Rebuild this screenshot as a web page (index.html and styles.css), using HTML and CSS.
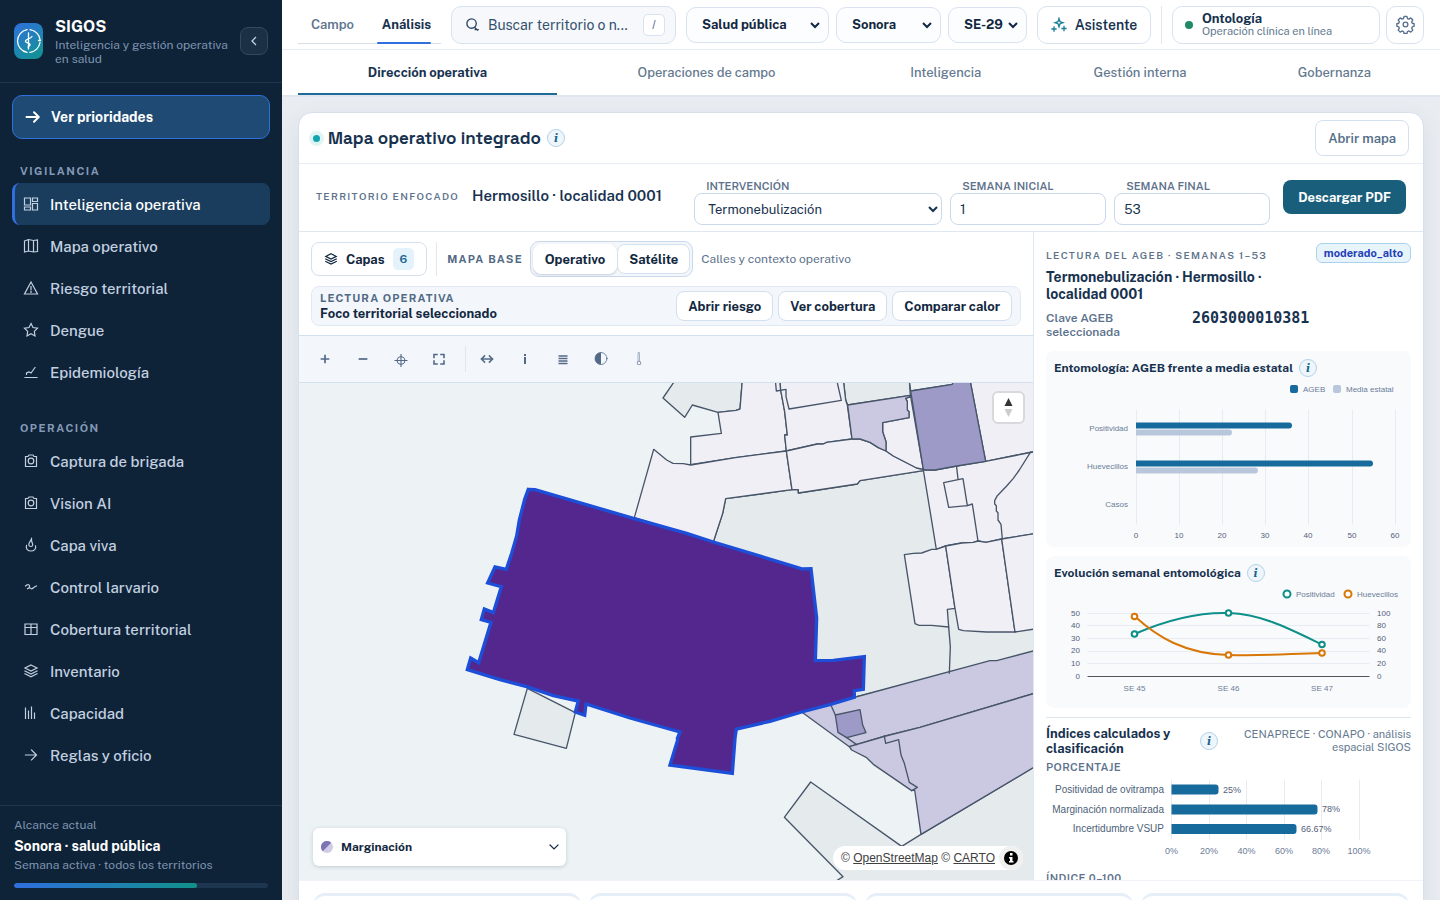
FILE: index.html
```html
<!DOCTYPE html>
<html lang="es">
<head>
<meta charset="utf-8">
<meta name="viewport" content="width=device-width, initial-scale=1">
<title>SIGOS</title>
<link rel="stylesheet" href="styles.css">
</head>
<body>
<div class="app">
  <aside class="sidebar">
    <header class="brand">
      <svg class="brand-logo" viewBox="0 0 29 36" aria-hidden="true">
        <defs><linearGradient id="logo" x1="0" y1="0" x2=".5" y2="1"><stop offset="0" stop-color="#2f6fde"/><stop offset="1" stop-color="#15909a"/></linearGradient></defs>
        <rect width="29" height="36" rx="8" fill="url(#logo)"/>
        <g fill="none" stroke="#fff" stroke-width="1.3" stroke-linecap="round">
          <path d="M13 6.6A11.6 11.6 0 0 0 13 29.400M16 6.600A11.600 11.600 0 0 1 26 16.500M26 19.500A11.600 11.600 0 0 1 16 29.400"/>
          <path d="M14.500 10v16M18 13.500c-2 3-7 2.500-6.500 5 .5 1.500 5 1.500 4.500 3.500-.3 1-1.500 1.500-2 2M24.500 17.500h2"/>
        </g>
      </svg>
      <div class="brand-text">
        <strong>SIGOS</strong>
        <span>Inteligencia y gestión operativa en salud</span>
      </div>
      <button class="collapse" aria-label="Contraer menú"><svg viewBox="0 0 10 10"><path d="M6.500 1.500L3 5l3.500 3.500"/></svg></button>
    </header>
    <div class="side-scroll">
      <button class="priority"><svg viewBox="0 0 16 16"><path d="M1.500 8h12M9 3.200L13.800 8 9 12.800"/></svg>Ver prioridades</button>
      <nav class="nav-group" aria-label="Vigilancia">
        <h2>Vigilancia</h2>
        <a class="nav-item active" href="#"><svg viewBox="0 0 16 16"><path d="M1.500 2h6v7h-6zM9.500 2h5v3.500h-5zM1.500 11h6v3h-6zM9.500 7.500h5V14h-5z"/></svg>Inteligencia operativa</a>
        <a class="nav-item" href="#"><svg viewBox="0 0 16 16"><path d="M1.500 3l4-1.500 5 1 4 -.5v11.500l-4 .5-5-1-4 1zM5.500 1.500V13M10.500 2.500V14"/></svg>Mapa operativo</a>
        <a class="nav-item" href="#"><svg viewBox="0 0 16 16"><path d="M8 2l6.500 12h-13zM8 6.500V10M8 11.500v1"/></svg>Riesgo territorial</a>
        <a class="nav-item" href="#"><svg viewBox="0 0 16 16"><path d="M8 1.500l2 4 4.500.7-3.200 3.200.7 4.600-4-2.200-4 2.200.7-4.600L1.500 6.200 6 5.500z"/></svg>Dengue</a>
        <a class="nav-item" href="#"><svg viewBox="0 0 16 16"><path d="M2 13.500h12M3.500 10.500V9l2.500-1 2 1 4-5.500"/></svg>Epidemiología</a>
      </nav>
      <nav class="nav-group" aria-label="Operación">
        <h2>Operación</h2>
        <a class="nav-item" href="#"><svg viewBox="0 0 16 16"><path d="M2.500 3.500H5L6 2h4l1 1.500h2.500v10h-11z"/><circle cx="8" cy="8" r="2.800"/></svg>Captura de brigada</a>
        <a class="nav-item" href="#"><svg viewBox="0 0 16 16"><path d="M2.500 3.500H5L6 2h4l1 1.500h2.500v10h-11z"/><circle cx="8" cy="8" r="2.800"/></svg>Vision AI</a>
        <a class="nav-item" href="#"><svg viewBox="0 0 16 16"><path d="M8.500 1.500C8 4 5.500 5.500 5.800 8c.2 2 3.700 2 3.900 0C9.800 6 8 5 8.500 1.500M3.500 8.500C2.500 12 5 14 8 14s5.500-2 4.500-5"/></svg>Capa viva</a>
        <a class="nav-item" href="#"><svg viewBox="0 0 16 16"><path d="M2.500 7C5 4.500 7 6 6.500 8S4 9.500 4.500 9.500 7 8 8 9.500s3-2 5.500-2.500"/></svg>Control larvario</a>
        <a class="nav-item" href="#"><svg viewBox="0 0 16 16"><path d="M2 3h12v10.500H2zM2 6.500h12M8 3v10.500"/></svg>Cobertura territorial</a>
        <a class="nav-item" href="#"><svg viewBox="0 0 16 16"><path d="M8 2l6 3-6 3-6-3zM2 8l6 3 6-3M2 10.800l6 3 6-3"/></svg>Inventario</a>
        <a class="nav-item" href="#"><svg viewBox="0 0 16 16"><path d="M2.500 3v10.500M5.500 6v7.500M8.500 2v11.500M11.500 8v5.500"/></svg>Capacidad</a>
        <a class="nav-item" href="#"><svg viewBox="0 0 16 16"><path d="M2.500 8h11M8.500 3l5 5-5 5"/></svg>Reglas y oficio</a>
      </nav>
    </div>
    <footer class="scope">
      <span>Alcance actual</span>
      <strong>Sonora · salud pública</strong>
      <span>Semana activa · todos los territorios</span>
      <div class="scope-bar"><i></i></div>
    </footer>
  </aside>

  <div class="page">
    <header class="topbar">
      <div class="modes">
        <button class="mode">Campo</button>
        <button class="mode on">Análisis</button>
      </div>
      <label class="search">
        <svg viewBox="0 0 16 16"><circle cx="7" cy="7" r="5"/><path d="M10 11l3.500 3M11 13.500h3"/></svg>
        <input type="text" placeholder="Buscar territorio o n..." aria-label="Buscar territorio">
        <kbd>/</kbd>
      </label>
      <div class="pick sector"><select aria-label="Sector"><option>Salud pública</option></select></div>
      <div class="pick state"><select aria-label="Estado"><option>Sonora</option></select></div>
      <div class="pick week"><select aria-label="Semana"><option>SE-29</option></select></div>
      <button class="assistant"><svg viewBox="0 0 16 16"><path d="M8 1.500l1 3.200 3 1-3 1-1 3.200-1-3.200-3-1 3-1zM3 10v4M1 12h4M13 9.500v4M11 11.500h4"/></svg>Asistente</button>
      <span class="top-divider"></span>
      <button class="status"><i></i><span><strong>Ontología</strong><small>Operación clínica en línea</small></span></button>
      <button class="gear" aria-label="Configuración"><svg viewBox="0 0 20 20"><circle cx="10" cy="10" r="2.500"/><path d="M8.500 1.500h3l.6 2.200 1.500.6 2-1.200 2.100 2.100-1.200 2 .6 1.500 2 .5v2.600l-2 .6-.6 1.500 1.200 2-2.100 2.100-2-1.200-1.500.6-.6 2.100h-3l-.6-2.100-1.500-.6-2 1.200-2.100-2.100 1.200-2-.6-1.500-2-.6V9.200l2-.5.6-1.500-1.200-2 2.100-2.100 2 1.200 1.500-.6z"/></svg></button>
    </header>
    <nav class="subnav" aria-label="Secciones">
      <a class="on" href="#">Dirección operativa</a>
      <a href="#">Operaciones de campo</a>
      <a href="#">Inteligencia</a>
      <a href="#">Gestión interna</a>
      <a href="#">Gobernanza</a>
    </nav>

    <main class="content">
      <section class="panel">
        <header class="panel-head">
          <i class="live"></i>
          <h1>Mapa operativo integrado</h1>
          <button class="info" aria-label="Información del mapa">i</button>
          <button class="btn open-map">Abrir mapa</button>
        </header>
        <form class="filters">
          <div class="focus"><span>Territorio enfocado</span><strong>Hermosillo · localidad 0001</strong></div>
          <label class="field wide">Intervención<select><option>Termonebulización</option></select></label>
          <label class="field">Semana inicial<input type="text" value="1"></label>
          <label class="field">Semana final<input type="text" value="53"></label>
          <button type="button" class="download">Descargar PDF</button>
        </form>

        <div class="workspace">
          <div class="map-side">
            <div class="map-controls">
              <div class="control-row">
                <button class="btn layers"><svg viewBox="0 0 16 16"><path d="M8 2l6 3-6 3-6-3zM2 8l6 3 6-3M2 10.800l6 3 6-3"/></svg>Capas<b>6</b></button>
                <span class="base-label">Mapa base</span>
                <div class="segment"><button class="on">Operativo</button><button>Satélite</button></div>
                <span class="hint">Calles y contexto operativo</span>
              </div>
              <div class="reading">
                <div><span>Lectura operativa</span><strong>Foco territorial seleccionado</strong></div>
                <button class="btn">Abrir riesgo</button>
                <button class="btn">Ver cobertura</button>
                <button class="btn">Comparar calor</button>
              </div>
            </div>
            <div class="tools">
              <button aria-label="Acercar"><svg viewBox="0 0 16 16"><path d="M8 4.500v7M4.500 8h7" stroke-width="1.700"/></svg></button>
              <button aria-label="Alejar"><svg viewBox="0 0 16 16"><path d="M4.500 8h7" stroke-width="1.700"/></svg></button>
              <button aria-label="Centrar"><svg viewBox="0 0 16 16"><circle cx="8" cy="9.500" r="3.800"/><path d="M8 3.500v12M2 9.500h12"/></svg></button>
              <button aria-label="Pantalla completa"><svg viewBox="0 0 16 16"><path d="M3 6.500v-3h3M10 3.500h3v3M13 10v3h-3M6 13H3v-3" stroke-width="1.600"/></svg></button>
              <span></span>
              <button aria-label="Medir"><svg viewBox="0 0 16 16"><path d="M2.500 8h11M5.500 5l-3 3 3 3M10.500 5l3 3-3 3" stroke-width="1.600"/></svg></button>
              <button aria-label="Información"><svg class="butt" viewBox="0 0 16 16"><path d="M8 6v7M8 3v2" stroke-width="2"/></svg></button>
              <button aria-label="Leyenda"><svg class="butt" viewBox="0 0 16 16"><path d="M3.500 5h9M3.500 7.500h9M3.500 10h9M3.500 12.500h9" stroke-width="1.500"/></svg></button>
              <button aria-label="Contraste"><svg viewBox="0 0 16 16"><circle cx="8" cy="7.500" r="6" stroke-width=".8"/><path class="solid" d="M8 1.500a6 6 0 0 0 0 12z"/></svg></button>
              <button class="off" aria-label="Anclar"><svg viewBox="0 0 16 16"><path d="M7.500 1.500h1v9h-1z" stroke-width=".8"/><circle cx="8" cy="12" r="1.800"/></svg></button>
            </div>
            <div class="map">
              <svg class="map-canvas" viewBox="-423 9 2202 1491" preserveAspectRatio="xMidYMid slice" role="img" aria-label="Mapa de marginación por AGEB">
                <g stroke="#475569" stroke-width="4" stroke-linejoin="round">
                  <g fill="#e5eaed">
                    <path d="M706 0L669 54 734 112 757 75 834 97 888 91 900 87 907 0z"/>
                    <path d="M820 486L848 400 857 356 1056 329H1075V339L1252 312 1260 302 1450 272 1790 216V820L1247 951 1100 900z"/>
                    <path d="M1210 0L1217 60 1223 75 1411 46 1408 0z"/>
                    <path d="M1112 1206L1385 1399 1443 1363 1790 1157V1520H1170L1193 1500 1209 1490 1033 1312z"/>
                    <path d="M262 925L222 1063 379 1105 406 998z"/>
                  </g>
                  <g fill="#f1eff6">
                    <path d="M907 0L900 87 888 91 834 97 844 160 752 171V254L886 233 1039 213 1034 165H1042L1034 95 1022 30 1020 0z"/>
                    <path d="M641 208L583 413 820 486 848 400 857 356 1056 329 1039 213 886 233 752 255 730 251 699 250 680 240z"/>
                    <path d="M1020 0L1022 30 1034 95 1042 165H1034L1039 213 1132 192H1150L1160 187 1236 177 1222 75 1217 60 1210 0z"/>
                    <path d="M1006 0L1009 33 1038 28V50L1047 87 1204 61 1190 0" fill="none"/>
                    <path d="M1039 213L1132 192H1150L1160 187 1236 177H1260L1290 187 1315 203 1338 213 1360 228 1430 264 1450 268V272L1260 302 1252 312 1075 339V329H1056z"/>
                    <path d="M1397 55L1412 50 1450 268 1430 264 1360 228 1338 213V185L1328 155V128L1407 113V95L1402 90V65z"/>
                    <path d="M1590 0H1790V213L1637 244z"/>
                    <path d="M1450 270H1485L1550 258 1637 244 1790 214V460L1685 477 1638 487 1614 483 1600 487 1565 489 1515 498 1489 508z"/>
                    <path d="M1393 524L1420 520 1445 519 1475 508 1489 508 1517 498 1545 685 1522 688 1526 741 1475 736H1437L1425 731z"/>
                    <path d="M1517 498L1565 489 1600 487 1614 483 1638 487 1685 477 1725 756H1640L1570 752 1556 748 1545 685z"/>
                    <path d="M1685 477L1790 460V746L1725 756z"/>
                  </g>
                  <path d="M1408 0L1412 33 1537 13 1540 0z" fill="#edf3f5"/>
                  <g fill="#cbc8e1">
                    <path d="M1223 75L1411 46 1411 50 1397 55 1402 65V90L1407 95V113L1328 128V155L1338 185V213L1315 203 1290 187 1260 177H1236z"/>
                    <path d="M1247 951L1650 842H1670L1790 810V938L1440 1042 1337 1068 1228 1100 1085 996z"/>
                    <path d="M1228 1100L1337 1068 1440 1042 1790 938V1157L1443 1363 1424 1230 1415 1232 1300 1153 1280 1133 1235 1110z"/>
                  </g>
                  <g fill="#9e9ac8">
                    <path d="M1412 33L1537 13 1540 0H1590L1637 244 1550 258 1485 270H1460L1450 268z"/>
                    <path d="M1186 1005L1260 989 1268 1035 1278 1058 1220 1073 1194 1057z"/>
                  </g>
                  <path fill="none" d="M1550 262L1554 297M1511 308L1569 296 1582 377 1526 382zM1582 377L1597 372 1606 430 1614 483M1771 217L1738 270 1720 295 1700 318 1672 347 1664 362V372L1669 377V393L1674 398V420L1683 433 1687 477M1526 741L1531 800 1528 879M1174 978L1186 1005M1220 1073L1250 1094M1333 1068L1337 1090 1376 1079 1383 1125 1393 1150 1408 1207 1432 1222 1415 1232"/>
                </g>
                <path fill="#54278f" stroke="#1d4ed8" stroke-width="10" d="M265 328L285 329 580 415 740 460 820 486 1088 567 1113 566 1130 714 1126 842 1180 841 1273 830 1270 928 1243 932V952L1172 973 1085 996 990 1024 889 1047 885 1075 877 1180 690 1155 713 1080 712 1075 720 1056 570 1014 438 972 434 1006 406 996 415 963 340 947 260 920 180 899 82 869 92 834 116 848 153 727 124 719 133 687 160 698 184 620 143 609 165 561 199 568 215 520 230 468 238 420 254 358z"/>
              </svg>
              <button class="compass" aria-label="Orientar al norte"><svg viewBox="0 0 29 29"><path fill="#333" d="M10.500 13l4-8 4 8z"/><path fill="#ccc" d="M10.500 16l4 8 4-8z"/></svg></button>
              <button class="legend"><svg class="swatch" viewBox="0 0 12 12"><circle cx="6" cy="6" r="6" fill="#cfcce4"/><path d="M1.700 10.200A6 6 0 0 1 10.200 1.700z" fill="#7b74b5"/></svg>Marginación<svg class="chev" viewBox="0 0 12 12"><path d="M2 4l4 4 4-4"/></svg></button>
              <div class="credits">© <a href="#">OpenStreetMap</a> © <a href="#">CARTO</a><svg viewBox="0 0 24 24"><circle cx="12" cy="12" r="12" fill="#f0f0f0"/><circle cx="12" cy="12" r="7" fill="#000"/><path fill="#fff" d="M11 7h2.500v2.500H11zM10 11h3.500v4h1v1.500H10V15h1v-2.500h-1z"/></svg></div>
            </div>
          </div>

          <aside class="detail">
            <header class="detail-head">
              <div>
                <span class="overline">Lectura del AGEB · Semanas 1–53</span>
                <h2>Termonebulización · Hermosillo · localidad 0001</h2>
              </div>
              <span class="badge">moderado_alto</span>
            </header>
            <div class="key"><span>Clave AGEB seleccionada</span><code>2603000010381</code></div>

            <section class="chart-card">
              <h3>Entomología: AGEB frente a media estatal <button class="info" aria-label="Información de entomología">i</button></h3>
              <svg class="chart" viewBox="1054 380 349 164" role="img" aria-label="AGEB frente a media estatal">
                <rect x="1290" y="385" width="8" height="8" rx="2" fill="#176b9c"/><text x="1303" y="392">AGEB</text>
                <rect x="1333" y="385" width="8" height="8" rx="2" fill="#b8c7dc"/><text x="1346" y="392">Media estatal</text>
                <path class="grid" d="M1136.500 410v114M1179.500 410v114M1222.500 410v114M1265.500 410v114M1308.500 410v114M1352.500 410v114M1395.500 410v114"/>
                <g fill="#176b9c"><path d="M1136 422.500h153q3 0 3 3t-3 3h-153zM1136 460.500h234q3 0 3 3t-3 3h-234z"/></g>
                <g fill="#b8c7dc"><path d="M1136 429.500h93q3 0 3 3t-3 3h-93zM1136 467.500h119q3 0 3 3t-3 3h-119z"/></g>
                <g text-anchor="end"><text x="1128" y="431">Positividad</text><text x="1128" y="469">Huevecillos</text><text x="1128" y="507">Casos</text></g>
                <g class="dark" text-anchor="middle"><text x="1136" y="538">0</text><text x="1179" y="538">10</text><text x="1222" y="538">20</text><text x="1265" y="538">30</text><text x="1308" y="538">40</text><text x="1352" y="538">50</text><text x="1395" y="538">60</text></g>
              </svg>
            </section>

            <section class="chart-card">
              <h3>Evolución semanal entomológica <button class="info" aria-label="Información de evolución">i</button></h3>
              <svg class="chart" viewBox="1054 585 349 120" role="img" aria-label="Evolución semanal">
                <g fill="#fff" stroke-width="2"><circle cx="1287" cy="594" r="3.500" stroke="#0d8f8a"/><circle cx="1348" cy="594" r="3.500" stroke="#d97706"/></g>
                <text x="1296" y="597">Positividad</text><text x="1357" y="597">Huevecillos</text>
                <path class="grid" d="M1088 613.500h281M1088 625.500h281M1088 638.500h281M1088 651.500h281M1088 663.500h281"/>
                <path d="M1088 676.500h281" stroke="#54555a"/>
                <g fill="none" stroke-width="2"><path stroke="#0d8f8a" d="M1134.500 634C1162 622 1195 612 1228.500 613S1290 629 1322 644.500"/><path stroke="#d97706" d="M1134.500 616C1157 637 1185 654 1228.500 655S1290 653.500 1322 653"/></g>
                <g fill="#fff" stroke-width="2"><g stroke="#0d8f8a"><circle cx="1134.500" cy="634" r="2.800"/><circle cx="1228.500" cy="613" r="2.800"/><circle cx="1322" cy="644.500" r="2.800"/></g><g stroke="#d97706"><circle cx="1134.500" cy="616.500" r="2.800"/><circle cx="1228.500" cy="655" r="2.800"/><circle cx="1322" cy="653" r="2.800"/></g></g>
                <g class="dark" text-anchor="end"><text x="1080" y="616">50</text><text x="1080" y="628">40</text><text x="1080" y="641">30</text><text x="1080" y="653">20</text><text x="1080" y="666">10</text><text x="1080" y="679">0</text></g>
                <g class="dark"><text x="1377" y="616">100</text><text x="1377" y="628">80</text><text x="1377" y="641">60</text><text x="1377" y="653">40</text><text x="1377" y="666">20</text><text x="1377" y="679">0</text></g>
                <g text-anchor="middle"><text x="1134.500" y="691">SE 45</text><text x="1228.500" y="691">SE 46</text><text x="1322" y="691">SE 47</text></g>
              </svg>
            </section>

            <section class="indices">
              <header>
                <h3>Índices calculados y clasificación</h3>
                <button class="info" aria-label="Información de índices">i</button>
                <p>CENAPRECE · CONAPO · análisis espacial SIGOS</p>
              </header>
              <h4>Porcentaje</h4>
              <svg class="chart" viewBox="1046 777 365 86" role="img" aria-label="Índices en porcentaje">
                <path class="grid" d="M1171.500 780v59M1209.500 780v59M1246.500 780v59M1284.500 780v59M1321.500 780v59M1359.500 780v59"/>
                <path fill="#176b9c" d="M1171.500 784.500h44q3 0 3 3v4q0 3-3 3h-44zM1171.500 804.500h143q3 0 3 3v4q0 3-3 3h-143zM1171.500 824h122q3 0 3 3v4q0 3-3 3h-122z"/>
                <g class="big" text-anchor="end"><text x="1164" y="793">Positividad de ovitrampa</text><text x="1164" y="813">Marginación normalizada</text><text x="1164" y="832">Incertidumbre VSUP</text></g>
                <g class="mid dark"><text x="1223" y="793">25%</text><text x="1322" y="812">78%</text><text x="1301" y="832">66.67%</text></g>
                <g class="mid" text-anchor="middle"><text x="1171.500" y="854">0%</text><text x="1209" y="854">20%</text><text x="1246.500" y="854">40%</text><text x="1284" y="854">60%</text><text x="1321" y="854">80%</text><text x="1359" y="854">100%</text></g>
              </svg>
              <h4 class="next">Índice 0–100</h4>
            </section>
          </aside>
        </div>
        <div class="cards"><article></article><article></article><article></article><article></article></div>
      </section>
    </main>
  </div>
</div>
</body>
</html>
```

FILE: styles.css
```css
* { box-sizing: border-box; }
body { margin: 0; font-family: "Public Sans", Inter, "Liberation Sans", sans-serif; font-size: 12px; color: #17324f; }
button, input, select { font: inherit; color: inherit; margin: 0; }
button { cursor: pointer; padding: 0; border: 0; background: none; }
h1, h2, h3, h4, p { margin: 0; }
a { color: inherit; text-decoration: none; }
svg { display: block; fill: none; stroke-linecap: square; }

.app { display: grid; grid-template-columns: 282px minmax(0, 1fr); height: 100vh; overflow: hidden; background: #e9edf2; }

/* Sidebar */
.sidebar { display: flex; flex-direction: column; min-height: 0; background: #0e2338; color: #c3d0e0; }
.brand { display: flex; align-items: center; padding: 16px 14px; border-bottom: 1px solid #1f354c; }
.brand-logo { width: 29px; height: 36px; flex: none; }
.brand-text { flex: 1; display: flex; flex-direction: column; padding-left: 12px; }
.brand-text strong { font-size: 16px; line-height: 22px; font-weight: 700; color: #fff; }
.brand-text span { font-size: 12px; line-height: 14px; color: #7f93b0; }
.collapse { width: 28px; height: 28px; flex: none; border: 1px solid #34475c; border-radius: 8px; background: #1b2f45; display: grid; place-items: center; }
.collapse svg { width: 10px; stroke: #c3d0e0; stroke-width: 1.3; }
.side-scroll { flex: 1; min-height: 0; overflow: hidden; padding: 12px; }
.priority { display: flex; align-items: center; gap: 10px; width: 100%; height: 44px; padding-left: 12px; border: 1px solid #2f6fde; border-radius: 10px; background: #1e4a73; color: #fff; font-size: 14px; font-weight: 700; }
.priority svg { width: 16px; stroke: #fff; stroke-width: 2; stroke-linecap: round; stroke-linejoin: round; }
.nav-group { margin-top: 24px; }
.nav-group + .nav-group { margin-top: 27px; }
.nav-group h2 { padding: 0 8px 4px; font-size: 11px; line-height: 16px; font-weight: 700; letter-spacing: 1.5px; text-transform: uppercase; color: #8499b6; }
.nav-item { display: flex; align-items: center; gap: 11px; height: 42px; padding-left: 11px; border-radius: 8px; font-size: 15px; font-weight: 500; }
.nav-item svg { width: 16px; stroke: #c3d0e0; stroke-width: 1.2; }
.nav-item.active { padding-left: 8px; border-left: 3px solid #2f6fde; background: #1a3d5e; color: #fff; }
.scope { display: flex; flex-direction: column; padding: 10px 14px 12px; border-top: 1px solid #1f354c; font-size: 12px; line-height: 18px; color: #7f93b0; }
.scope strong { font-size: 14px; line-height: 24px; color: #fff; }
.scope span:nth-of-type(2) { line-height: 14px; }
.scope-bar { height: 5px; margin-top: 11px; border-radius: 3px; background: #1e3550; overflow: hidden; }
.scope-bar i { display: block; width: 72%; height: 100%; border-radius: 3px; background: linear-gradient(90deg, #2f6fde, #11918a); }

/* Top bar */
.page { display: flex; flex-direction: column; min-width: 0; min-height: 0; }
.topbar { display: flex; align-items: center; height: 50px; padding: 0 16px; background: #fff; border-bottom: 1px solid #e6ebf1; }
.modes { display: flex; align-self: stretch; margin: 0 10px 5px 0; width: 143px; border-bottom: 1px solid #d5dfea; }
.mode { flex: 1; padding-top: 5px; font-size: 13px; font-weight: 600; color: #5f7590; }
.mode.on { padding-left: 5px; color: #17324f; font-weight: 700; position: relative; }
.mode.on::after { content: ""; position: absolute; left: 10px; right: 10px; bottom: -1px; height: 2px; background: #2f6fde; border-radius: 2px; }
.search { display: flex; align-items: center; flex: 1; min-width: 0; height: 38px; margin-right: 10px; padding: 0 10px 0 13px; gap: 8px; border: 1px solid #d7e3f0; border-radius: 10px; background: #f6f8fb; }
.search svg { width: 15px; flex: none; stroke: #28425f; stroke-width: 1.4; }
.search input { flex: 1; min-width: 0; width: 0; padding: 0; border: 0; outline: 0; background: none; font-size: 14px; text-overflow: ellipsis; }
.search input::placeholder { color: #34506d; }
.search kbd { width: 22px; height: 22px; border: 1px solid #d7e3f0; border-radius: 5px; background: #fff; font: 12px/20px "Liberation Sans", sans-serif; text-align: center; color: #5f7590; }
.pick { height: 36px; margin-right: 7px; padding: 0 5px 0 11px; border: 1px solid #d7e3f0; border-radius: 10px; background: #fcfdff; }
.pick select { width: 100%; height: 100%; padding: 0; border: 0; background: transparent; font-size: 13px; font-weight: 700; color: #122740; }
.sector { width: 143px; }
.state { width: 105px; }
.week { width: 79px; margin-right: 10px; }
.assistant { display: flex; align-items: center; justify-content: center; gap: 8px; width: 114px; height: 38px; border: 1px solid #d7e3f0; border-radius: 10px; font-size: 14px; font-weight: 600; }
.assistant svg { width: 16px; stroke: #1a7d99; stroke-width: 1.3; }
.top-divider { width: 1px; height: 38px; margin: 0 10px; background: #e1e8f0; }
.status { display: flex; align-items: center; gap: 9px; width: 208px; height: 38px; padding-left: 12px; border: 1px solid #d7e3f0; border-radius: 10px; text-align: left; }
.status i { width: 8px; height: 8px; border-radius: 50%; background: #1f8a63; }
.status span { display: flex; flex-direction: column; }
.status strong { font-size: 13px; line-height: 13px; }
.status small { font-size: 11px; line-height: 12px; color: #64798f; }
.gear { width: 38px; height: 38px; margin-left: 6px; display: grid; place-items: center; border: 1px solid #d7e3f0; border-radius: 10px; }
.gear svg { width: 19px; stroke: #566f8c; stroke-width: 1.4; stroke-linejoin: round; }
.subnav { display: grid; grid-template-columns: 1.3fr 1.5fr .9fr 1.05fr .9fr; height: 47px; flex: none; padding: 0 16px; background: #fff; border-bottom: 2px solid #dfe6ef; }
.subnav a { display: grid; place-items: center; padding-top: 2px; border-bottom: 2px solid transparent; font-size: 13px; font-weight: 500; color: #64798f; }
.subnav a.on { font-weight: 700; color: #17324f; border-bottom-color: #1f6a96; }

/* Panel */
.content { flex: 1; min-height: 0; overflow: hidden; padding: 15px 16px 0; }
.panel { border: 1px solid #d7e1ec; border-radius: 14px 14px 0 0; background: #fff; box-shadow: 0 8px 24px rgba(23, 50, 79, .08); overflow: hidden; }
.panel-head { display: flex; align-items: center; padding: 7px 14px; border-bottom: 1px solid #e9eef4; }
.live { width: 7px; height: 7px; margin-right: 8px; border-radius: 50%; background: #12a5b0; box-shadow: 0 0 0 4px #e0f4f3; }
h1 { font-family: "Space Grotesk", Inter, sans-serif; font-size: 17px; font-weight: 600; }
.info { width: 18px; height: 18px; flex: none; border: 1px solid #b3d2e8; border-radius: 50%; background: #eef6fc; font: italic 700 11px/15px "DejaVu Serif", serif; text-align: center; color: #17648e; }
h1 + .info { margin-left: 6px; }
.btn { border: 1px solid #d3e0ee; border-radius: 8px; background: #fff; font-size: 13px; font-weight: 700; color: #122740; }
.open-map { margin-left: auto; height: 36px; padding: 0 12px; font-weight: 600; color: #566f88; }
.filters { display: flex; align-items: center; gap: 8px; padding: 15px 17px 6px; border-bottom: 1px solid #dfe8f1; }
.focus { flex: 1; display: flex; align-items: center; gap: 13px; padding-bottom: 13px; white-space: nowrap; }
.focus span, .overline { font-size: 10px; font-weight: 600; letter-spacing: 1.3px; text-transform: uppercase; color: #5d728c; }
.focus strong { font-size: 15px; font-weight: 600; }
.field { display: flex; flex-direction: column; width: 156px; text-indent: 12px; font-size: 11px; line-height: 14px; font-weight: 600; text-transform: uppercase; color: #5d728c; }
.field.wide { width: 248px; }
.field input, .field select { height: 32px; width: 100%; padding: 0 9px; border: 1px solid #c9d8ea; border-radius: 8px; background: #fff; text-indent: 0; font-size: 13px; font-weight: 400; color: #17324f; }
.field select { padding: 0 0 0 9px; }
.download { height: 34px; margin: 0 0 10px 5px; padding: 0 15px; border-radius: 8px; background: #195f7c; color: #fff; font-size: 13px; font-weight: 700; }

.workspace { display: grid; grid-template-columns: minmax(0, 1fr) 390px; height: calc(100vh - 252px); overflow: hidden; }
.map-side { display: flex; flex-direction: column; min-height: 0; min-width: 0; }
.map-controls { display: flex; flex-direction: column; gap: 9px; padding: 9px 12px; border-bottom: 1px solid #d3e0ee; }
.control-row { display: flex; align-items: center; }
.layers { display: flex; align-items: center; gap: 8px; height: 34px; padding: 0 12px; }
.layers svg { width: 14px; stroke: #122740; stroke-width: 1.3; }
.layers b { padding: 0 7px; border-radius: 5px; background: #e4f3fb; font-size: 12px; line-height: 22px; font-weight: 600; color: #17648e; }
.base-label { margin-left: 9px; padding-left: 10px; border-left: 1px solid #e1e8f0; font-size: 11px; line-height: 34px; font-weight: 700; letter-spacing: 1.2px; text-transform: uppercase; color: #526a85; }
.segment { display: flex; margin-left: 7px; padding: 2px; border: 1px solid #c9d8ea; border-radius: 9px; background: #f3f7fc; }
.segment button { height: 30px; padding: 0 11px; border: 1px solid #d3e0ee; border-radius: 8px; background: #fff; font-size: 13px; font-weight: 700; color: #122740; }
.segment .on { border-color: #fff; box-shadow: 0 1px 2px rgba(23, 50, 79, .2); }
.hint { margin-left: 8px; color: #5d728c; }
.reading { display: flex; align-items: center; gap: 5px; padding: 4px 8px; border: 1px solid #e1eaf4; border-radius: 8px; background: #f3f7fc; }
.reading div { flex: 1; display: flex; flex-direction: column; }
.reading span { font-size: 11px; line-height: 15px; font-weight: 700; letter-spacing: 1.1px; text-transform: uppercase; color: #526a85; }
.reading strong { font-size: 13px; line-height: 15px; color: #122740; }
.reading .btn { height: 30px; padding: 0 11px; }
.tools { display: flex; align-items: center; height: 47px; flex: none; padding-left: 7px; border-bottom: 1px solid #d3e0ee; background: #f3f7fc; }
.tools button { width: 38px; height: 38px; display: grid; place-items: center; }
.tools span { width: 1px; height: 26px; margin: 0 2px 0 7px; background: #dfe8f1; }
.tools svg { width: 16px; stroke: #526a85; stroke-width: 1.1; }
.tools .butt { stroke-linecap: butt; }
.tools .solid { fill: #526a85; stroke: none; }
.tools .off { opacity: .6; }
.map { position: relative; flex: 1; min-height: 0; background: #edf3f5; overflow: hidden; }
.map-canvas { width: 100%; height: 100%; }
.compass { position: absolute; top: 8px; right: 8px; width: 33px; height: 33px; padding: 0; border: 2px solid #d9d9dd; border-radius: 6px; background: #fff; }
.legend { position: absolute; left: 14px; bottom: 14px; display: flex; align-items: center; gap: 8px; width: 253px; height: 38px; padding: 0 6px 0 8px; border-radius: 6px; background: #fff; box-shadow: 0 1px 4px rgba(23, 50, 79, .2); font-size: 12px; font-weight: 700; color: #122740; }
.swatch { width: 12px; }
.chev { width: 12px; margin-left: auto; stroke: #122740; stroke-width: 1.2; }
.credits { position: absolute; right: 10px; bottom: 10px; display: flex; align-items: center; height: 24px; padding-left: 8px; border-radius: 12px; background: #fff; font: 12px/20px "Liberation Sans", sans-serif; color: #404040; white-space: pre; }
.credits a { text-decoration: underline; }
.credits svg { width: 24px; margin-left: 4px; }

/* Detail column */
.detail { border-left: 1px solid #dfe8f1; padding: 11px 12px 0; overflow-y: auto; scrollbar-width: none; }
.detail-head { display: flex; align-items: flex-start; gap: 8px; }
.detail-head div { flex: 1; }
.overline { display: block; padding-top: 4px; line-height: 16px; white-space: nowrap; }
.detail h2 { max-width: 240px; padding-top: 6px; font-size: 14px; line-height: 17px; font-weight: 700; }
.badge { padding: 0 7px; border: 1px solid #a9d3ec; border-radius: 6px; background: #e8f4fb; font-size: 11px; line-height: 18px; font-weight: 700; color: #2340b8; }
.key { display: grid; grid-template-columns: 138px 1fr; gap: 8px; margin: 8px 0 12px; font-size: 12px; line-height: 14px; font-weight: 600; color: #5d728c; }
.key span { max-width: 100px; }
.key code { font: 700 15px/14px "DejaVu Sans Mono", monospace; color: #17324f; }
.chart-card { margin-bottom: 9px; padding: 8px 8px 3px; border-radius: 8px; background: #f9fafc; }
.chart-card h3, .indices h3 { display: flex; align-items: center; gap: 6px; font-size: 12px; font-weight: 700; line-height: 18px; }
.chart { width: 100%; margin-top: 3px; }
.chart text { font: 8px "Liberation Sans", sans-serif; fill: #6b7c98; }
.chart .mid text { font-size: 9px; }
.chart .big text { font-size: 10px; fill: #4d6178; }
.chart .dark text { fill: #54607a; }
.grid { stroke: #e8ebf1; }
.indices { border-top: 1px solid #dde5ef; padding-top: 8px; }
.indices header { display: grid; grid-template-columns: 146px 18px 1fr; align-items: center; gap: 8px; }
.indices h3 { font-size: 13px; line-height: 15px; }
.indices p { font-size: 11px; line-height: 13px; text-align: right; color: #64798f; }
.indices h4 { margin-top: 3px; font-size: 11px; line-height: 16px; font-weight: 600; letter-spacing: .4px; text-transform: uppercase; color: #5d728c; }
.indices .chart { margin-top: 2px; }
.indices .next { margin-top: 7px; }

.cards { display: grid; grid-template-columns: repeat(4, 1fr); gap: 8px; padding: 12px 14px; border-top: 1px solid #f0f3f7; }
.cards article { min-height: 80px; border: 1px solid #e6eef7; border-top-width: 3px; border-radius: 12px; background: #fff; }
```
